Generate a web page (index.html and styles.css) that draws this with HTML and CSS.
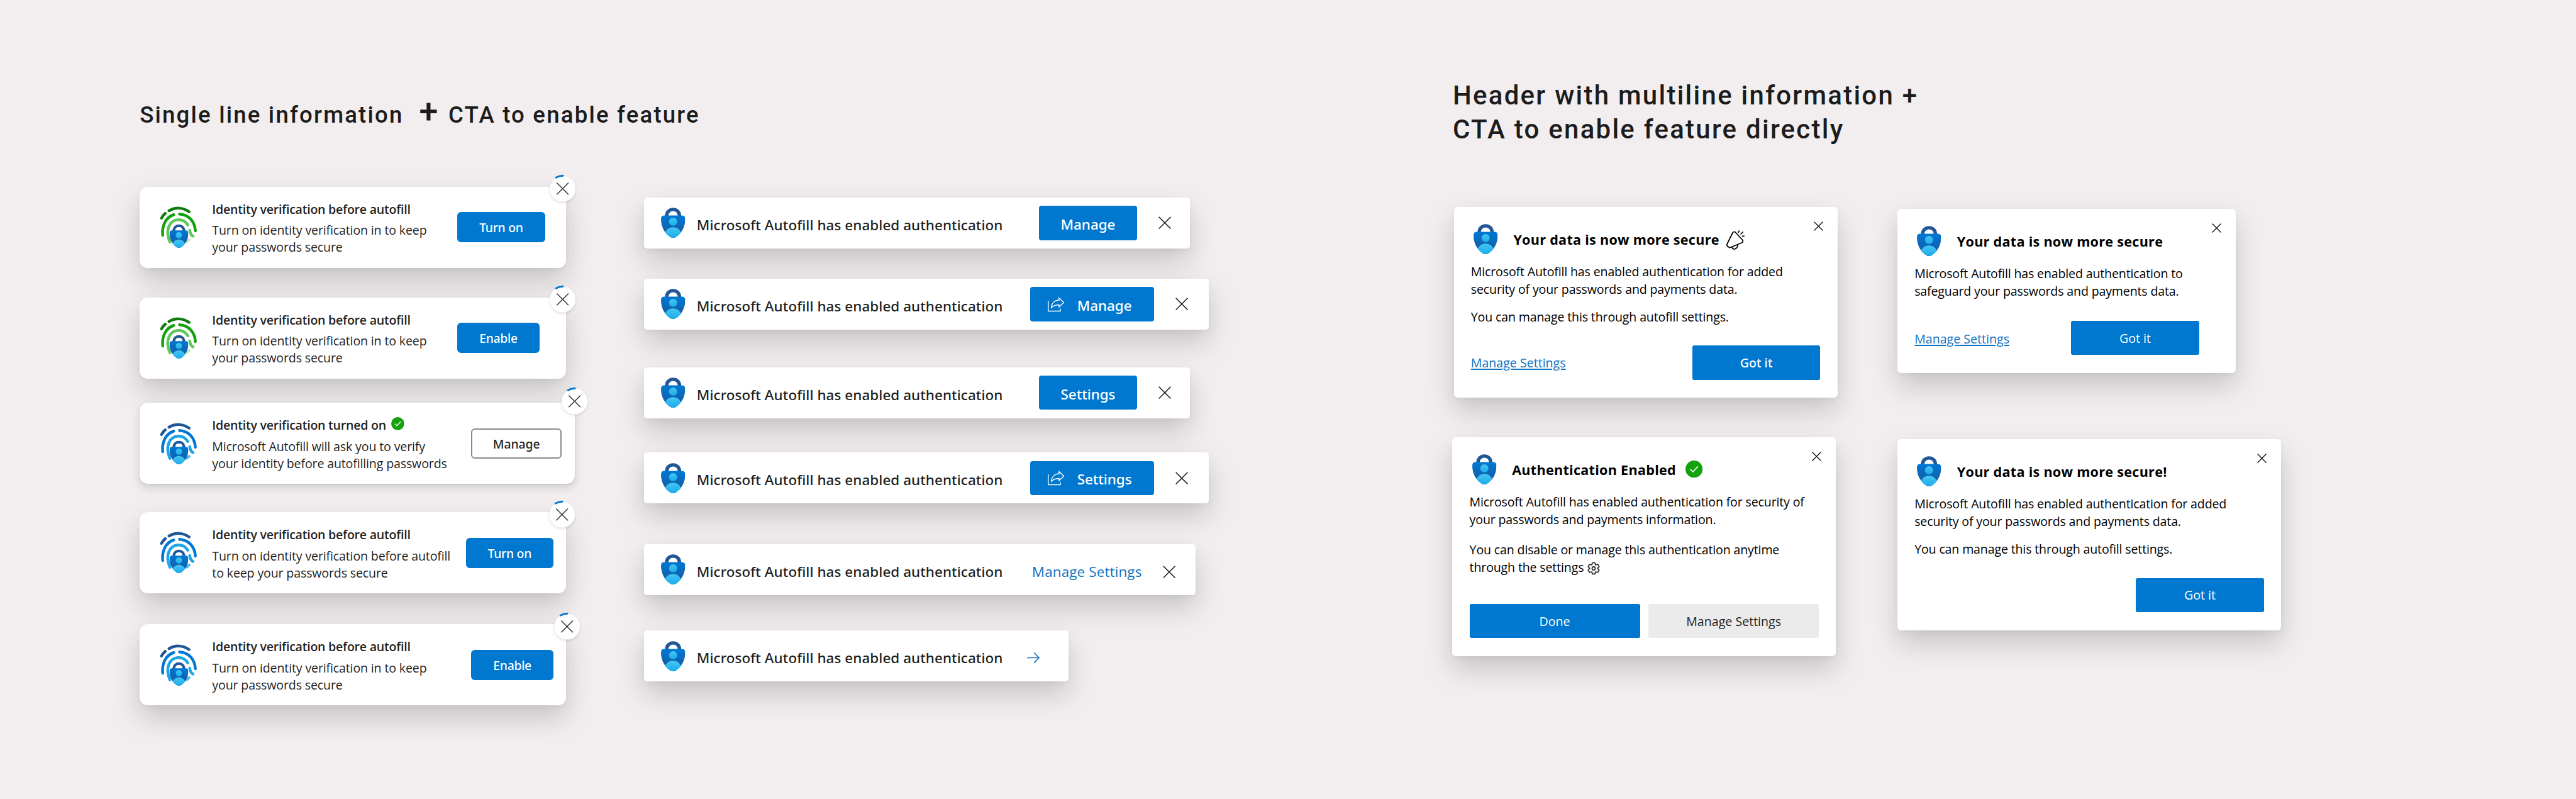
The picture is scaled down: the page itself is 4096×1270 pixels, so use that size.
FILE: index.html
```html
<!DOCTYPE html>
<html lang="en">
<head>
<meta charset="utf-8">
<meta name="viewport" content="width=device-width, initial-scale=1">
<title>Autofill notifications</title>
<link rel="stylesheet" href="styles.css">
</head>
<body>

<!-- shared icons -->
<svg class="defs" width="0" height="0">
  <defs>
    <linearGradient id="shield" x1="0" y1="0" x2="0" y2="1">
      <stop offset="0" stop-color="#0078d4"/>
      <stop offset="1" stop-color="#1b5497"/>
    </linearGradient>
    <linearGradient id="person" x1="0" y1="0" x2="0" y2="1">
      <stop offset="0" stop-color="#45c6f3"/>
      <stop offset="1" stop-color="#1cabeb"/>
    </linearGradient>
  </defs>
  <symbol id="lock" viewBox="208 318 120 150">
    <path d="M236 360C236 316 300 316 300 360" fill="#fff" stroke="#225797" stroke-width="17"/>
    <path d="M225 357H311Q328 357 328 374C328 412 313 442 282 464Q268 472 254 464C223 442 208 412 208 374Q208 357 225 357Z" fill="url(#shield)"/>
    <circle cx="268" cy="388" r="20" fill="url(#person)"/>
    <path d="M229 442C241 407 295 407 307 442Q296 456 282 464Q268 472 254 464Q240 456 229 442Z" fill="url(#person)"/>
  </symbol>
  <symbol id="fingerprint" viewBox="146 204 238 266">
    <g fill="none" stroke-width="18" stroke-linecap="round">
      <path class="fp-dark" d="M205 232C245 209 292 209 333 238M157 279Q166 262 181 249"/>
      <path class="fp-mid" d="M165 388C158 327 186 272 235 257M272 253C335 257 370 305 373 360"/>
      <path class="fp-light" d="M211 431C196 400 192 358 205 330C228 280 293 274 325 323M337 356C339 375 346 387 358 394"/>
      <path class="fp-pale" d="M318 430L333 417"/>
    </g>
    <use href="#lock" x="208" y="318" width="120" height="150"/>
  </symbol>
  <symbol id="badge" viewBox="108 60 172 180">
    <circle cx="194.5" cy="152" r="82" fill="#fff"/>
    <path d="M153 81Q171 70 196 69" fill="none" stroke="#0078d4" stroke-width="12" stroke-linecap="round"/>
    <path d="M159 116L230 187M230 116L159 187" fill="none" stroke="#3b3b3b" stroke-width="6.5" stroke-linecap="round"/>
  </symbol>
  <symbol id="close" viewBox="0 0 20 20">
    <path d="M.7 .7L19.3 19.3M19.3 .7L.7 19.3" fill="none" stroke="currentColor" stroke-width="1.6"/>
  </symbol>
  <symbol id="check" viewBox="0 0 20 20">
    <circle cx="10" cy="10" r="10" fill="#13a10e"/>
    <path d="M5.9 10.4L8.8 13.2L14.2 7.2" fill="none" stroke="#fff" stroke-width="1.2" stroke-linecap="round" stroke-linejoin="round"/>
  </symbol>
  <symbol id="share" viewBox="132 92 114 100">
    <g fill="none" stroke="#fff" stroke-width="5.5">
      <path d="M139 120V186H216V170"/>
      <path d="M208 102L238 131L208 160V146C186 146 171 152 159 164C161 137 178 117 208 116Z"/>
    </g>
  </symbol>
  <symbol id="bell" viewBox="42 52 122 130">
    <g fill="none" stroke="#000" stroke-width="7" stroke-linecap="round" stroke-linejoin="round">
      <path d="M86 72Q95 61 105 70L148 117Q157 130 143 136L72 165Q66 168 61 163L52 156Q47 151 50 145Z"/>
      <path d="M82 166C88 182 116 178 118 149M124 69L127 60M138 80L151 67M148 93H159"/>
    </g>
  </symbol>
  <symbol id="gear" viewBox="1 1 22 22">
    <g fill="none" stroke="#1f1f1f" stroke-width="1.8" stroke-linejoin="round">
      <path d="M9.8 2.2H14.2L15.2 5.9L19.2 5L21.6 9.1L18.8 12L21.6 14.9L19.2 19L15.2 18.1L14.2 21.8H9.8L8.8 18.1L4.8 19L2.4 14.9L5.2 12L2.4 9.1L4.8 5L8.8 5.9Z"/>
      <circle cx="12" cy="12" r="2.8"/>
    </g>
  </symbol>
  <symbol id="arrow" viewBox="0 0 20 17">
    <path d="M0 8.5H19M11 .5L19 8.5L11 16.5" fill="none" stroke="#1672bd" stroke-width="1.7"/>
  </symbol>
</svg>

<div class="board">

  <section class="single">
    <h1><span>Single line information</span><span class="plus">+</span><span>CTA to enable feature</span></h1>
    <div class="columns">

      <div class="toasts">
        <div class="toast green">
          <svg class="fingerprint"><use href="#fingerprint"/></svg>
          <div class="text">
            <h3>Identity verification before autofill</h3>
            <p>Turn on identity verification in to keep<br>your passwords secure</p>
          </div>
          <button class="btn w-turn">Turn on</button>
          <svg class="badge"><use href="#badge"/></svg>
        </div>

        <div class="toast green second">
          <svg class="fingerprint"><use href="#fingerprint"/></svg>
          <div class="text">
            <h3>Identity verification before autofill</h3>
            <p>Turn on identity verification in to keep<br>your passwords secure</p>
          </div>
          <button class="btn w-enable">Enable</button>
          <svg class="badge"><use href="#badge"/></svg>
        </div>

        <div class="toast blue third">
          <svg class="fingerprint"><use href="#fingerprint"/></svg>
          <div class="text">
            <h3>Identity verification turned on <svg class="check"><use href="#check"/></svg></h3>
            <p>Microsoft Autofill will ask you to verify<br>your identity before autofilling passwords</p>
          </div>
          <button class="btn outline w-manage">Manage</button>
          <svg class="badge"><use href="#badge"/></svg>
        </div>

        <div class="toast blue fourth">
          <svg class="fingerprint"><use href="#fingerprint"/></svg>
          <div class="text">
            <h3>Identity verification before autofill</h3>
            <p>Turn on identity verification before autofill<br>to keep your passwords secure</p>
          </div>
          <button class="btn w-turn">Turn on</button>
          <svg class="badge"><use href="#badge"/></svg>
        </div>

        <div class="toast blue fifth">
          <svg class="fingerprint"><use href="#fingerprint"/></svg>
          <div class="text">
            <h3>Identity verification before autofill</h3>
            <p>Turn on identity verification in to keep<br>your passwords secure</p>
          </div>
          <button class="btn w-enable">Enable</button>
          <svg class="badge"><use href="#badge"/></svg>
        </div>
      </div>

      <div class="bars">
        <div class="bar">
          <svg class="lock"><use href="#lock"/></svg>
          <span class="msg">Microsoft Autofill has enabled authentication</span>
          <button class="btn">Manage</button>
          <svg class="x"><use href="#close"/></svg>
        </div>
        <div class="bar wide second">
          <svg class="lock"><use href="#lock"/></svg>
          <span class="msg">Microsoft Autofill has enabled authentication</span>
          <button class="btn"><svg class="share"><use href="#share"/></svg>Manage</button>
          <svg class="x"><use href="#close"/></svg>
        </div>
        <div class="bar third">
          <svg class="lock"><use href="#lock"/></svg>
          <span class="msg">Microsoft Autofill has enabled authentication</span>
          <button class="btn">Settings</button>
          <svg class="x"><use href="#close"/></svg>
        </div>
        <div class="bar wide fourth">
          <svg class="lock"><use href="#lock"/></svg>
          <span class="msg">Microsoft Autofill has enabled authentication</span>
          <button class="btn"><svg class="share"><use href="#share"/></svg>Settings</button>
          <svg class="x"><use href="#close"/></svg>
        </div>
        <div class="bar linked fifth">
          <svg class="lock"><use href="#lock"/></svg>
          <span class="msg">Microsoft Autofill has enabled authentication</span>
          <a class="link">Manage Settings</a>
          <svg class="x"><use href="#close"/></svg>
        </div>
        <div class="bar short sixth">
          <svg class="lock"><use href="#lock"/></svg>
          <span class="msg">Microsoft Autofill has enabled authentication</span>
          <svg class="arrow"><use href="#arrow"/></svg>
        </div>
      </div>

    </div>
  </section>

  <section class="multi">
    <h2>Header with multiline information +<br>CTA to enable feature directly</h2>
    <div class="columns">

      <div class="dialogs">
        <div class="dialog added">
          <div class="head">
            <svg class="lock"><use href="#lock"/></svg>
            <h3>Your data is now more secure</h3>
            <svg class="bell"><use href="#bell"/></svg>
            <svg class="x"><use href="#close"/></svg>
          </div>
          <p>Microsoft Autofill has enabled authentication for added<br>security of your passwords and payments data.</p>
          <p>You can manage this through autofill settings.</p>
          <div class="actions">
            <a class="link">Manage Settings</a>
            <button class="btn strong">Got it</button>
          </div>
        </div>

        <div class="dialog enabled">
          <div class="head">
            <svg class="lock"><use href="#lock"/></svg>
            <h3>Authentication Enabled</h3>
            <svg class="check"><use href="#check"/></svg>
            <svg class="x"><use href="#close"/></svg>
          </div>
          <p>Microsoft Autofill has enabled authentication for security of<br>your passwords and payments information.</p>
          <p>You can disable or manage this authentication anytime<br>through the settings <svg class="gear"><use href="#gear"/></svg></p>
          <div class="actions">
            <button class="btn">Done</button>
            <button class="btn grey">Manage Settings</button>
          </div>
        </div>
      </div>

      <div class="dialogs right">
        <div class="dialog safeguard">
          <div class="head">
            <svg class="lock"><use href="#lock"/></svg>
            <h3>Your data is now more secure</h3>
            <svg class="x"><use href="#close"/></svg>
          </div>
          <p>Microsoft Autofill has enabled authentication to<br>safeguard your passwords and payments data.</p>
          <div class="actions">
            <a class="link">Manage Settings</a>
            <button class="btn">Got it</button>
          </div>
        </div>

        <div class="dialog plain">
          <div class="head">
            <svg class="lock"><use href="#lock"/></svg>
            <h3>Your data is now more secure!</h3>
            <svg class="x"><use href="#close"/></svg>
          </div>
          <p>Microsoft Autofill has enabled authentication for added<br>security of your passwords and payments data.</p>
          <p>You can manage this through autofill settings.</p>
          <div class="actions">
            <button class="btn">Got it</button>
          </div>
        </div>
      </div>

    </div>
  </section>

</div>

</body>
</html>
```

FILE: styles.css
```css
* {box-sizing: border-box;}

body {
  margin: 0;
  background-color: #f2eeef;
  font-family: "Segoe UI", "Open Sans", "Noto Sans", sans-serif;
  color: #1f1f1f;
}

h1, h2, h3, p {
  margin: 0;
}

svg {
  display: block;
  flex: none;
  overflow: visible;
}

.defs {
  position: absolute;
}

.board {
  width: 4096px;
  height: 1270px;
  display: flex;
  overflow: hidden;
}

.single {
  width: 2311.5px;
  padding: 155px 0 0 222.2px;
}

.multi {
  padding-top: 125px;
}

.columns {
  display: flex;
  align-items: flex-start;
}

/* Section headings */
h1, h2 {
  font-family: Roboto, sans-serif;
  font-weight: 500;
  color: #1c1c1c;
  white-space: nowrap;
}

h1 {
  display: flex;
  align-items: baseline;
  height: 60px;
  margin-bottom: 81.6px;
  font-size: 36.6px;
  line-height: 44px;
  letter-spacing: 2.2px;
}

h1 .plus {
  margin: 0 14.5px 0 25px;
  font-size: 54px;
  font-weight: 500;
  letter-spacing: 0;
  width: 32px;
}

h2 {
  margin: 0 0 95.9px -1.5px;
  font-size: 42px;
  line-height: 54px;
  letter-spacing: 2.25px;
}

/* Buttons and links */
.btn {
  display: flex;
  align-items: center;
  justify-content: center;
  flex: none;
  height: 47.8px;
  padding: 1px 0 0;
  border: none;
  border-radius: 6px;
  background-color: #0078d0;
  color: #fff;
  font-family: "Segoe UI", "Noto Sans", sans-serif;
  font-size: 19.4px;
  font-weight: 500;
  letter-spacing: -0.3px;
}

.btn.outline {
  padding-top: 2px;
  border: 2px solid #8a8a8a;
  background-color: #fff;
  color: #1f1f1f;
  letter-spacing: -0.1px;
}

.btn.grey {
  background-color: #ebebeb;
  color: #1f1f1f;
}

.link {
  color: #0f73c3;
}

/* Toasts with a countdown badge on the corner */
.toasts {
  width: 801.6px;
}

.toast {
  position: relative;
  display: flex;
  align-items: center;
  width: 678px;
  height: 129px;
  padding: 0 33.6px 0 31.4px;
  border-radius: 13px;
  background-color: #fff;
  box-shadow: 0 20px 44px rgba(0, 0, 0, 0.18), 0 3px 10px rgba(0, 0, 0, 0.04);
}

.toast.second {
  margin-top: 47px;
  padding-right: 42.3px;
}

.toast.third {
  width: 691.5px;
  margin-top: 38.7px;
  padding-right: 20.8px;
  box-shadow: 0 6px 15px rgba(0, 0, 0, 0.14), 0 1px 3px rgba(0, 0, 0, 0.1);
}

.toast.fourth {
  margin-top: 44.9px;
  padding-right: 20.2px;
}

.toast.fifth {
  margin-top: 49.1px;
  padding-right: 20.2px;
}

.fingerprint {
  width: 59.4px;
  height: 66.4px;
}

.green .fingerprint {
  --dark: #107c10;
  --mid: #13a10e;
  --light: #5ec75a;
  --pale: #c3edc0;
}

.blue .fingerprint {
  --dark: #225797;
  --mid: #0078d4;
  --light: #1ca5e8;
  --pale: #50bdf0;
}

.fp-dark {stroke: var(--dark);}
.fp-mid {stroke: var(--mid);}
.fp-light {stroke: var(--light);}
.fp-pale {stroke: var(--pale);}

.toast .text {
  flex: 1;
  align-self: flex-start;
  padding: 22px 0 0 24.4px;
  white-space: nowrap;
  font-size: 19.6px;
  line-height: 27px;
}

.toast h3 {
  display: flex;
  align-items: center;
  gap: 8px;
  margin-bottom: 6.7px;
  font-size: 19.6px;
  font-weight: 600;
  letter-spacing: -0.26px;
}

.toast p {
  letter-spacing: -0.15px;
}

.toast .check {
  width: 20.8px;
  height: 20.8px;
  margin-top: -4px;
}

.w-turn {width: 139.4px;}
.w-enable {width: 130.8px;}
.w-manage {width: 143.6px;}

.badge {
  position: absolute;
  top: -19.5px;
  right: -16px;
  width: 43px;
  height: 45px;
  filter: drop-shadow(0 2px 2px rgba(0, 0, 0, 0.12));
}

.third .badge {
  top: -25.5px;
  right: -21.8px;
}

.fourth .badge {
  right: -14.5px;
}

.fifth .badge {
  right: -23px;
}

/* One line bars */
.bars {
  padding-top: 17.3px;
}

.bar {
  display: flex;
  align-items: center;
  width: 868.1px;
  height: 80.9px;
  padding: 0 29.8px 0 26.9px;
  border-radius: 5px;
  background-color: #fff;
  box-shadow: 0 20px 44px rgba(0, 0, 0, 0.18), 0 3px 10px rgba(0, 0, 0, 0.04);
  font-size: 22.5px;
}

.bar.wide {width: 898.7px; padding-right: 33.5px;}
.bar.linked {width: 877.3px;}
.bar.short {width: 674.9px;}
.bar.second {margin-top: 48.2px;}
.bar.third {margin-top: 59.9px;}
.bar.fourth {margin-top: 54.7px;}
.bar.fifth {margin-top: 64.7px;}
.bar.sixth {margin-top: 56.4px;}

.lock {
  width: 38.5px;
  height: 48px;
}

.msg {
  flex: 1;
  padding: 6px 0 0 18.6px;
  font-family: "Segoe UI", "Noto Sans", sans-serif;
  font-weight: 500;
  letter-spacing: 0.03px;
  white-space: nowrap;
}

.bar .btn {
  width: 155.9px;
  height: 54.4px;
  padding-top: 4px;
  border-radius: 4px;
  font-size: 22.5px;
  letter-spacing: -0.1px;
}

.bar.wide .btn {
  width: 196.9px;
  padding-right: 8px;
}

.share {
  width: 28.5px;
  height: 25px;
  margin: -4px 19px 0 0;
}

.bar .x {
  width: 20.2px;
  height: 20.2px;
  margin-left: 34px;
}

.bar.linked {
  padding-right: 32.3px;
}

.bar.linked .link {
  padding-top: 6px;
  letter-spacing: 0.1px;
}

.bar.linked .x {
  margin: 7px 0 0 33.1px;
}

.arrow {
  width: 20.2px;
  height: 17px;
  margin: 5px 18px 0 0;
}

.bar.short {
  padding-right: 27.2px;
}

/* Dialogs */
.dialogs {
  width: 705.4px;
}

.dialogs.right {
  padding-top: 3px;
}

.dialog {
  display: flex;
  flex-direction: column;
  width: 610px;
  padding: 27px 27.2px 28.6px 27.3px;
  border-radius: 6px;
  background-color: #fff;
  box-shadow: 0 20px 44px rgba(0, 0, 0, 0.18), 0 3px 10px rgba(0, 0, 0, 0.04);
  color: #000;
  font-size: 19.6px;
  line-height: 27.3px;
}

.dialog.added {height: 303.3px;}
.dialog.enabled {height: 348px; margin: 62.7px 0 0 -2.2px;}
.dialog.safeguard {width: 537.8px; height: 261.2px;}
.dialog.plain {height: 303.8px; margin-top: 104.8px;}

.head {
  display: flex;
  align-items: flex-start;
  height: 47.8px;
  margin: 0 -4.2px 14.8px 3.9px;
}

.head h3 {
  margin: 10.5px 0 0 25.2px;
  font-size: 21.6px;
  font-weight: 700;
  line-height: 30px;
  letter-spacing: 0.27px;
}

.head .bell {
  width: 30.5px;
  height: 32.5px;
  margin: 9.4px 0 0 10.5px;
}

.head .check {
  width: 27.3px;
  height: 27.3px;
  margin: 10.5px 0 0 14.6px;
}

.head .x {
  width: 15px;
  height: 15px;
  margin: -4px 0 0 auto;
}

.dialog p {
  letter-spacing: -0.16px;
  white-space: nowrap;
}

.dialog p + p {
  margin-top: 16.7px;
}

.enabled p + p {
  margin-top: 21.4px;
}

.gear {
  display: inline-block;
  width: 20px;
  height: 20.8px;
  margin-left: 1px;
  vertical-align: -5px;
}

.actions {
  display: flex;
  align-items: center;
  justify-content: space-between;
  gap: 13.6px;
  margin-top: auto;
}

.actions .link {
  text-decoration: underline;
  text-decoration-thickness: 1.5px;
  text-underline-offset: 2px;
}

.actions .btn {
  width: 203.4px;
  height: 54.4px;
  margin-left: auto;
  padding: 0;
  border-radius: 3px;
  font-family: inherit;
  font-size: 19.6px;
  font-weight: 400;
  letter-spacing: 0;
}

.actions .btn.strong {
  font-family: "Segoe UI", "Noto Sans", sans-serif;
  font-weight: 500;
}

.enabled .actions .btn {
  flex: 1;
}

.safeguard .actions {
  margin-right: 30.9px;
}

.safeguard .link {
  padding-top: 2px;
}
```
